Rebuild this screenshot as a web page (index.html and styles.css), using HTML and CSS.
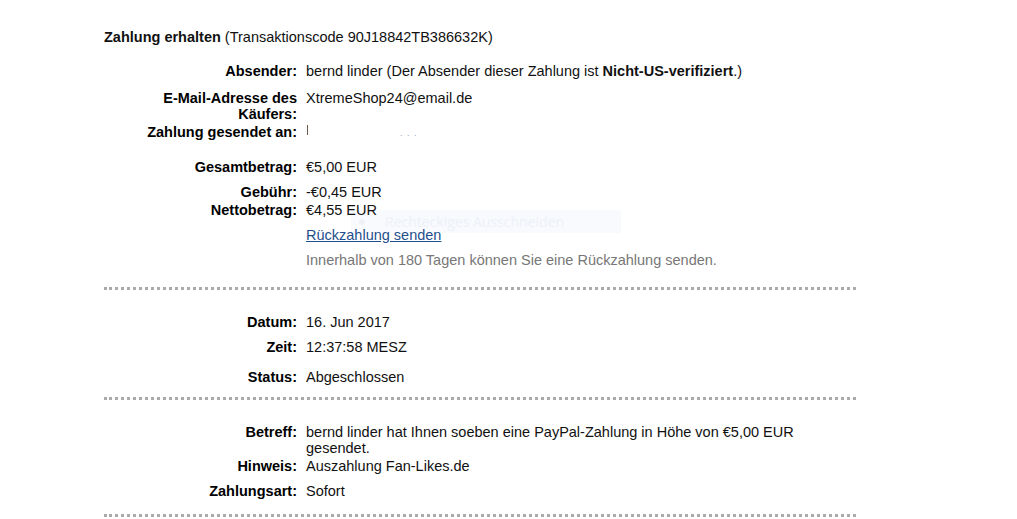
FILE: index.html
```html
<!DOCTYPE html>
<html lang="de">
<head>
    <meta charset="UTF-8">
    <meta name="viewport" content="width=device-width, initial-scale=1.0">
    <title>Zahlung erhalten</title>
    <link rel="stylesheet" href="styles.css">
</head>
<body>

    <div class="container">
        <h1 class="title"><strong>Zahlung erhalten</strong> (Transaktionscode 90J18842TB386632K)</h1>

        <!-- Zahlungsdetails -->
        <div class="section first">
            <div class="row">
                <span class="label">Absender:</span>
                <span class="value">bernd linder (Der Absender dieser Zahlung ist <strong>Nicht-US-verifiziert</strong>.)</span>
            </div>
            <div class="row open">
                <span class="label">E-Mail-Adresse des Käufers:</span>
                <span class="value">XtremeShop24@email.de</span>
            </div>
            <div class="row tight">
                <span class="label">Zahlung gesendet an:</span>
                <span class="value redacted"><i class="mark"></i><i class="specks">. . .</i></span>
            </div>
            <div class="row wide">
                <span class="label">Gesamtbetrag:</span>
                <span class="value">€5,00 EUR</span>
            </div>
            <div class="row">
                <span class="label">Gebühr:</span>
                <span class="value">-€0,45 EUR</span>
            </div>
            <div class="row tight">
                <span class="label">Nettobetrag:</span>
                <span class="value">€4,55 EUR</span>
            </div>
            <div class="row">
                <span class="label"></span>
                <span class="value"><a href="#">Rückzahlung senden</a></span>
            </div>
            <div class="row">
                <span class="label"></span>
                <span class="value note">Innerhalb von 180 Tagen können Sie eine Rückzahlung senden.</span>
            </div>

            <!-- Overlay vom Screenshot-Werkzeug, liegt hinter dem Text -->
            <div class="snip-hint"><span class="snip-dot"></span>Rechteckiges Ausschneiden</div>
        </div>
        <div class="dots"></div>

        <!-- Datum / Status -->
        <div class="section">
            <div class="row">
                <span class="label">Datum:</span>
                <span class="value">16. Jun 2017</span>
            </div>
            <div class="row">
                <span class="label">Zeit:</span>
                <span class="value">12:37:58 MESZ</span>
            </div>
            <div class="row mid">
                <span class="label">Status:</span>
                <span class="value">Abgeschlossen</span>
            </div>
        </div>
        <div class="dots"></div>

        <!-- Nachricht -->
        <div class="section last">
            <div class="row">
                <span class="label">Betreff:</span>
                <span class="value">bernd linder hat Ihnen soeben eine PayPal-Zahlung in Höhe von €5,00 EUR gesendet.</span>
            </div>
            <div class="row tight">
                <span class="label">Hinweis:</span>
                <span class="value">Auszahlung Fan-Likes.de</span>
            </div>
            <div class="row">
                <span class="label">Zahlungsart:</span>
                <span class="value">Sofort</span>
            </div>
        </div>
        <div class="dots"></div>
    </div>

</body>
</html>
```

FILE: styles.css
```css
body {
    font-family: "Liberation Sans", Arial, sans-serif;
    font-size: 14.5px;
    line-height: 16px;
    margin: 0;
    padding: 0;
    background-color: #fff;
    color: #111;
}

.container {
    width: 752px;
    margin-left: 104px;
    padding-top: 29px;
}

.title {
    font-size: 14.5px;
    font-weight: normal;
    line-height: 16px;
    margin: 0;
}

.section {
    position: relative;
    padding: 24px 0 12px 33px;
}

.section.first {
    padding-top: 18px;
    padding-bottom: 19px;
}

.section.last {
    padding-bottom: 15px;
}

.row {
    position: relative;
    z-index: 1;
    display: grid;
    grid-template-columns: 160px 500px;
    column-gap: 9px;
    margin-top: 9px;
}

.row:first-child {
    margin-top: 0;
}

.row.tight {
    margin-top: 2px;
}

.row.open {
    margin-top: 11px;
}

.row.mid {
    margin-top: 14px;
}

.row.wide {
    margin-top: 19px;
}

.label {
    font-weight: bold;
    text-align: right;
    color: #000;
}

.value a {
    color: #1f4f8c;
    text-decoration: underline;
}

.note {
    color: #777;
}

.redacted {
    position: relative;
    height: 16px;
}

.mark {
    position: absolute;
    left: 1px;
    top: 1px;
    width: 1px;
    height: 10px;
    background-color: #6b5a4a;
}

.specks {
    position: absolute;
    left: 94px;
    top: 1px;
    font-style: normal;
    font-size: 9px;
    color: #9ab;
    letter-spacing: 1px;
}

.dots {
    border-top: 3px dotted #aaa;
    height: 0;
}

.snip-hint {
    position: absolute;
    z-index: 0;
    left: 247px;
    top: 165px;
    width: 262px;
    height: 23px;
    padding-left: 8px;
    background-color: #f8fafe;
    color: #eef1f8;
    font-family: "Open Sans", "Noto Sans", sans-serif;
    font-size: 14px;
    line-height: 23px;
    display: flex;
    align-items: center;
    gap: 20px;
}

.snip-dot {
    width: 6px;
    height: 6px;
    border-radius: 50%;
    background-color: #eff1f6;
}
```
